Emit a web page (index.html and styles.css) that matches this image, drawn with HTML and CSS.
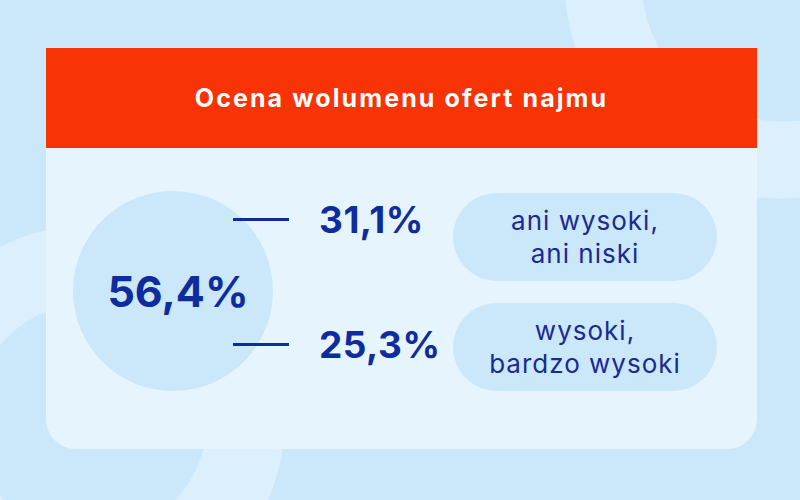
FILE: index.html
```html
<!DOCTYPE html>
<html lang="pl">
<head>
<meta charset="utf-8">
<title>Ocena wolumenu ofert najmu</title>
<link rel="stylesheet" href="styles.css">
</head>
<body>
<svg class="bg-rings" width="800" height="500" viewBox="0 0 800 500" aria-hidden="true">
  <circle cx="783" cy="-20" r="180" fill="none" stroke="#dbeffc" stroke-width="77"/>
  <circle cx="90" cy="420" r="156" fill="none" stroke="#dbeffc" stroke-width="78"/>
</svg>
<main class="card">
  <header class="card-head">
    <h1 class="title">Ocena wolumenu ofert najmu</h1>
  </header>
  <section class="card-body">
    <div class="total">56,4%</div>
    <div class="parts">
      <div class="part part-1"><span class="rule"></span><span class="value">31,1%</span></div>
      <div class="part part-2"><span class="rule"></span><span class="value">25,3%</span></div>
    </div>
    <div class="labels">
      <div class="pill">ani wysoki,<br>ani niski</div>
      <div class="pill">wysoki,<br>bardzo wysoki</div>
    </div>
  </section>
</main>
</body>
</html>
```
FILE: styles.css
```css
* { box-sizing: border-box; }
html, body {
  margin: 0;
  padding: 0;
}
body {
  width: 800px;
  height: 500px;
  overflow: hidden;
  background: #cbe8fb;
  font-family: Inter, "Noto Sans", sans-serif;
  position: relative;
}
.bg-rings {
  position: absolute;
  left: 0;
  top: 0;
}
.card {
  position: relative;
  margin: 48px 0 0 46px;
  width: 711px;
  height: 401px;
  background: #e6f4fd;
  border-radius: 0 0 30px 30px;
  overflow: hidden;
}
.card-head {
  height: 100px;
  background: #f83306;
  display: flex;
  align-items: center;
  justify-content: center;
}
.title {
  margin: 0;
  color: #ffffff;
  font-size: 25px;
  font-weight: 700;
  letter-spacing: 2.1px;
}
.card-body {
  display: flex;
  align-items: flex-start;
  padding: 43px 0 0 27px;
}
.total {
  width: 200px;
  height: 200px;
  flex: none;
  border-radius: 50%;
  background: #cbe7fa;
  color: #0f2c9e;
  font-size: 43px;
  font-weight: 700;
  display: flex;
  align-items: center;
  justify-content: center;
  padding-left: 10px;
}
.parts {
  position: relative;
  margin-left: -40px;
  width: 220px;
  flex: none;
  display: flex;
  flex-direction: column;
  gap: 85px;
  padding-top: 8px;
}
.part {
  height: 40px;
  display: flex;
  align-items: center;
  gap: 30px;
}
.rule {
  width: 56px;
  height: 3px;
  background: #0f2c9e;
  flex: none;
}
.value {
  color: #0f2c9e;
  font-size: 37px;
  font-weight: 700;
  letter-spacing: 0.5px;
}
.labels {
  margin-top: 2px;
  display: flex;
  flex-direction: column;
  gap: 22px;
}
.pill {
  width: 264px;
  height: 88px;
  border-radius: 44px;
  background: #cbe7fa;
  color: #1a2a92;
  font-size: 26px;
  line-height: 33px;
  letter-spacing: 1px;
  text-align: center;
  display: flex;
  align-items: center;
  justify-content: center;
}
```
